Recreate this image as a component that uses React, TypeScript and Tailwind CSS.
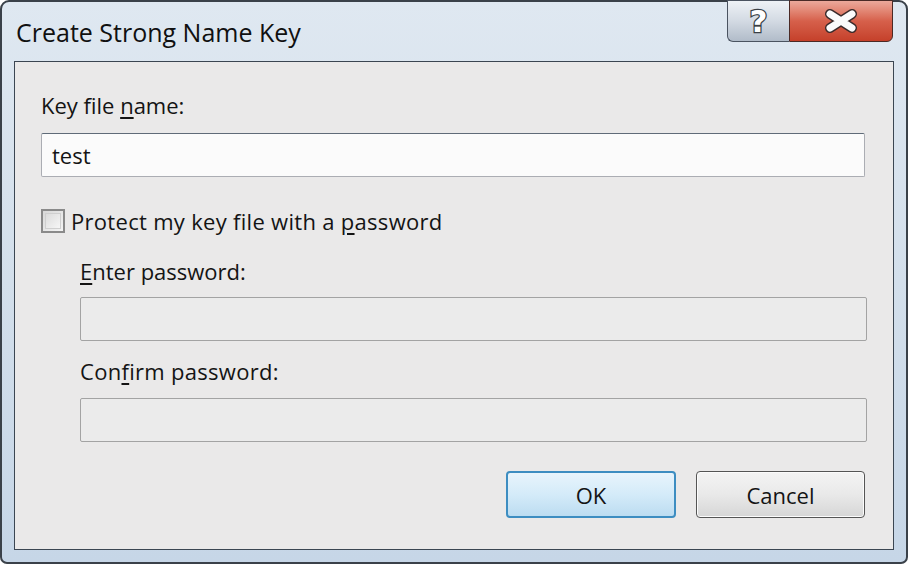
export default function App() {
  return (
    <div className="h-[564px] w-[908px] overflow-hidden bg-white font-['Open_Sans',sans-serif] text-[#141414]">
      <div className="flex h-full flex-col rounded-t-[9px] rounded-b-[7px] border-2 border-[#3a4149] bg-gradient-to-b from-[#dfe8f1] via-[#d3dfeb] to-[#c6d6e7]">
        {/* title bar */}
        <div className="flex h-[59px] items-start justify-between">
          <span className="pl-[14px] pt-[12px] text-[25px] leading-[36px] text-[#101010]">Create Strong Name Key</span>
          <div className="-mt-[2px] mr-[13px] flex h-[42px]">
            <div className="flex w-[62px] items-center justify-center rounded-bl-[6px] border border-r-0 border-[#4a5360] bg-gradient-to-b from-[#eef2f6] via-[#d3dae3] to-[#b1bcc9]">
              <span className="font-['DejaVu_Sans',sans-serif] text-[31px] font-bold leading-none text-white [-webkit-text-stroke:2.5px_#3a3f46] [paint-order:stroke_fill]">?</span>
            </div>
            <div className="flex w-[104px] items-center justify-center rounded-br-[6px] border border-[#4a2a26] bg-gradient-to-b from-[#eba99b] via-[#d6604b] to-[#c5402a]">
              <svg width="36" height="24" viewBox="0 0 36 24">
                <path d="M7 5 L29 19 M29 5 L7 19" stroke="#3a2b2b" strokeWidth="10" strokeLinecap="round" />
                <path d="M7 5 L29 19 M29 5 L7 19" stroke="#fbfbfb" strokeWidth="7" strokeLinecap="round" />
              </svg>
            </div>
          </div>
        </div>

        {/* client area */}
        <div className="mx-[12px] flex flex-1 flex-col border border-[#3b4652] bg-[#eae9e9] pl-[26px] pr-[28px] pt-[28px] text-[22px] leading-[30px]">
          <div>
            Key file <u className="underline-offset-[3px]">n</u>ame:
          </div>
          <div className="mt-[13px] flex h-[44px] items-center rounded-[2px] border border-[#abadb3] border-t-[#5f6b78] bg-[#fbfbfb] pl-[10px]">
            test
          </div>

          <div className="mt-[29px] flex items-center gap-[6px]">
            <div className="h-[24px] w-[24px] border-2 border-[#8a8a8a] bg-gradient-to-br from-[#d8d8d8] to-[#f4f4f4] p-[2px]">
              <div className="h-full w-full border border-[#cfcfcf] bg-gradient-to-br from-[#dcdcdc] to-[#f6f6f6]" />
            </div>
            <span className="tracking-[0.3px]">
              Protect my key file with a <u className="underline-offset-[3px]">p</u>assword
            </span>
          </div>

          <div className="ml-[39px] mr-[-2px] flex flex-col">
            <div className="mt-[20px]">
              <u className="underline-offset-[3px]">E</u>nter password:
            </div>
            <div className="mt-[11px] h-[44px] rounded-[2px] border border-[#a3a3a3] bg-[#ebebeb]" />
            <div className="mt-[15px] tracking-[0.3px]">
              Con<u className="underline-offset-[3px]">f</u>irm password:
            </div>
            <div className="mt-[12px] h-[44px] rounded-[2px] border border-[#a3a3a3] bg-[#ebebeb]" />
          </div>

          <div className="mt-[29px] flex justify-end gap-[20px]">
            <button className="h-[47px] w-[170px] rounded-[4px] border-2 border-[#3d8dc1] bg-gradient-to-b from-[#e8f4fc] via-[#d4ebf9] to-[#bcdcf1] text-[22px] text-[#141414]">
              OK
            </button>
            <button className="h-[47px] w-[169px] rounded-[4px] border border-[#555555] bg-gradient-to-b from-[#f4f4f4] via-[#e9e9e9] to-[#d6d6d6] text-[22px] text-[#141414] shadow-[inset_0_0_0_1px_#fcfcfc]">
              Cancel
            </button>
          </div>
        </div>
        <div className="h-[12px]" />
      </div>
    </div>
  );
}
